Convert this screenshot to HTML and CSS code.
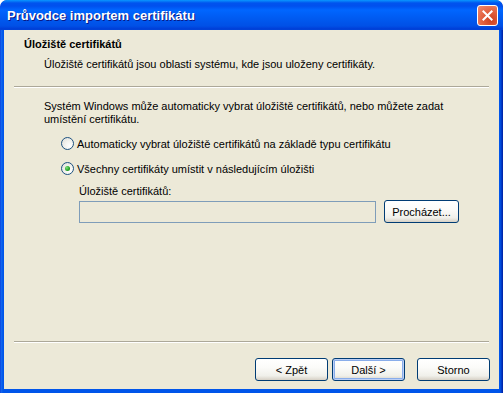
FILE: index.html
```html
<!DOCTYPE html>
<html>
<head>
<meta charset="utf-8">
<link rel="stylesheet" href="styles.css">
</head>
<body>
<div class="window">
  <div class="titlebar">
    <span class="title">Průvodce importem certifikátu</span>
    <span class="close">
      <svg width="21" height="21" viewBox="0 0 21 21">
        <path d="M6 6 L15 15 M15 6 L6 15" stroke="#fff" stroke-width="2.2" stroke-linecap="square"/>
      </svg>
    </span>
  </div>
  <div class="client">
    <div class="header">
      <div class="h-title">Úložiště certifikátů</div>
      <div class="h-sub">Úložiště certifikátů jsou oblasti systému, kde jsou uloženy certifikáty.</div>
    </div>
    <div class="sep"></div>
    <div class="content">
      <p class="intro">Systém Windows může automaticky vybrat úložiště certifikátů, nebo můžete zadat umístění certifikátu.</p>
      <div class="radio-row"><span class="radio"></span><span>Automaticky vybrat úložiště certifikátů na základě typu certifikátu</span></div>
      <div class="radio-row"><span class="radio checked"></span><span>Všechny certifikáty umístit v následujícím úložišti</span></div>
      <div class="store">
        <div class="store-label">Úložiště certifikátů:</div>
        <div class="store-row">
          <div class="input"></div>
          <button class="btn browse">Procházet...</button>
        </div>
      </div>
    </div>
    <div class="spacer"></div>
    <div class="sep bottom"></div>
    <div class="footer">
      <button class="btn">&lt; Zpět</button>
      <button class="btn default">Další &gt;</button>
      <button class="btn storno">Storno</button>
    </div>
  </div>
</div>
</body>
</html>
```
FILE: styles.css
```css
html, body {
  margin: 0;
  padding: 0;
  background: #fff;
}
body {
  font-family: "Liberation Sans", Arial, sans-serif;
  font-size: 11px;
  color: #000;
}
.window {
  width: 503px;
  height: 393px;
  display: flex;
  flex-direction: column;
  background: linear-gradient(to right, #0831d9 0, #166aee 1px, #0055ea 3px, #0055ea calc(100% - 3px), #001ea0 100%);
  border-radius: 7px 7px 0 0;
  overflow: hidden;
}
.titlebar {
  height: 30px;
  flex: none;
  display: flex;
  align-items: center;
  justify-content: space-between;
  padding: 0 5px 0 7px;
  background: linear-gradient(to bottom, #0997ff 0, #0053ee 3px, #0050ee 6px, #0066ff 10px, #0058ee 20px, #0050e6 26px, #003dd7 29px, #0046d8 30px);
  border-radius: 7px 7px 0 0;
}
.title {
  color: #fff;
  font-family: "Liberation Sans", Arial, sans-serif;
  font-weight: bold;
  font-size: 13px;
  text-shadow: 1px 1px 0 #0a1883;
  margin-top: 1px;
}
.close {
  width: 21px;
  height: 21px;
  border: 1px solid #fff;
  border-radius: 3px;
  box-sizing: border-box;
  background: radial-gradient(circle at 70% 75%, #cc4020 0, #e2603e 45%, #f08c70 100%);
  display: flex;
  align-items: center;
  justify-content: center;
}
.close svg { display: block; width: 19px; height: 19px; }
.client {
  flex: 1;
  margin: 0 4px 4px 4px;
  background: #ece9d8;
  display: flex;
  flex-direction: column;
}
.header {
  padding: 8px 0 0 20px;
  height: 48px;
  box-sizing: border-box;
}
.h-title {
  font-weight: bold;
  line-height: 13px;
}
.h-sub {
  margin-top: 7px;
  padding-left: 20px;
  line-height: 13px;
}
.sep {
  margin: 8px 10px 0 10px;
  border-top: 1px solid #aca899;
  border-bottom: 1px solid #fff;
  height: 0;
}
.content {
  padding: 0 0 0 40px;
}
.intro {
  margin: 12px 0 0 0;
  line-height: 13px;
  width: 420px;
}
.radio-row {
  display: flex;
  align-items: center;
  margin-top: 10px;
  padding-left: 17px;
  height: 15px;
}
.radio-row + .radio-row { margin-top: 10px; }
.radio {
  width: 13px;
  height: 13px;
  box-sizing: border-box;
  border: 1px solid #1c5180;
  border-radius: 50%;
  background: radial-gradient(circle at 70% 70%, #fff 0, #f4f4f0 40%, #dcdcd6 100%);
  margin-right: 3px;
  display: flex;
  align-items: center;
  justify-content: center;
}
.radio.checked::after {
  content: "";
  width: 5px;
  height: 5px;
  border-radius: 50%;
  background: radial-gradient(circle at 35% 35%, #7ee07e 0, #21a121 60%, #1a861a 100%);
}
.store {
  padding-left: 35px;
  margin-top: 9px;
}
.store-label {
  line-height: 13px;
}
.store-row {
  display: flex;
  align-items: center;
  margin-top: 2px;
}
.input {
  width: 297px;
  height: 22px;
  box-sizing: border-box;
  border: 1px solid #7f9db9;
  background: #ece9d8;
}
.btn {
  font-family: "Liberation Sans", Arial, sans-serif;
  font-size: 11px;
  color: #000;
  width: 73px;
  height: 23px;
  box-sizing: border-box;
  border: 1px solid #003c74;
  border-radius: 3px;
  background: linear-gradient(to bottom, #ffffff 0, #fbfbf9 40%, #f0f0ea 80%, #d6d0c5 100%);
  padding: 0;
}
.browse {
  width: 75px;
  margin-left: 8px;
}
.btn.default {
  box-shadow: inset 0 0 0 1px #bccff6, inset 0 0 0 2px #89adea;
}
.spacer { flex: 1; }
.sep.bottom {
  margin-top: 0;
}
.footer {
  display: flex;
  justify-content: flex-end;
  padding: 15px 9px 8px 0;
  gap: 4px;
}
.btn.storno { margin-left: 8px; }
```
